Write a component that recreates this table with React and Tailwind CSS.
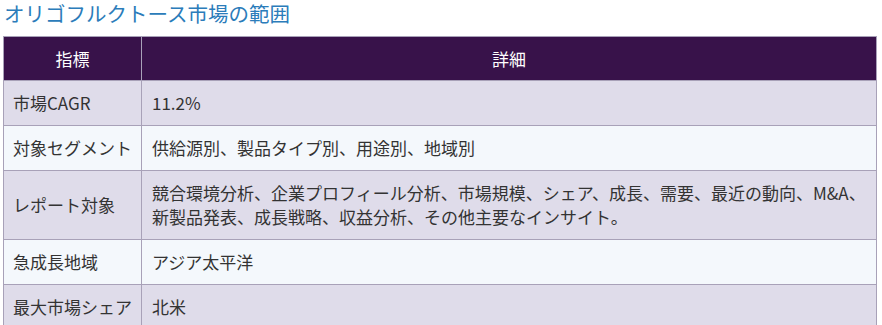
import React from 'react';

const rows = [
  { label: '市場CAGR', value: '11.2%' },
  { label: '対象セグメント', value: '供給源別、製品タイプ別、用途別、地域別' },
  {
    label: 'レポート対象',
    value: '競合環境分析、企業プロフィール分析、市場規模、シェア、成長、需要、最近の動向、M&A、新製品発表、成長戦略、収益分析、その他主要なインサイト。',
  },
  { label: '急成長地域', value: 'アジア太平洋' },
  { label: '最大市場シェア', value: '北米' },
];

const App = () => {
  return (
    <div
      className="w-[882px] h-[325px] bg-white overflow-hidden pl-[3px] pr-[5px]"
      style={{ fontFamily: '"Segoe UI", "Noto Sans CJK JP", "Noto Sans", sans-serif' }}
    >
      <h2 className="text-[20.5px] leading-[26px] text-[#2b7cba] font-normal h-[36px] pl-px">
        オリゴフルクトース市場の範囲
      </h2>
      <table className="w-full border-collapse text-[17px] leading-[24px] text-[#333]">
        <thead>
          <tr className="bg-[#38124a] text-white">
            <th className="w-[137px] border border-[#a8a1b8] h-[44px] font-normal text-center">指標</th>
            <th className="border border-[#a8a1b8] font-normal text-center">詳細</th>
          </tr>
        </thead>
        <tbody>
          {rows.map((r, i) => (
            <tr key={r.label} className={i % 2 === 0 ? 'bg-[#dfdcea]' : 'bg-[#f4f8fc]'}>
              <td className="border border-[#a8a1b8] px-[9px] py-[10px] whitespace-nowrap">{r.label}</td>
              <td className="border border-[#a8a1b8] px-[10px] py-[10px]">{r.value}</td>
            </tr>
          ))}
        </tbody>
      </table>
    </div>
  );
};

export default App;
